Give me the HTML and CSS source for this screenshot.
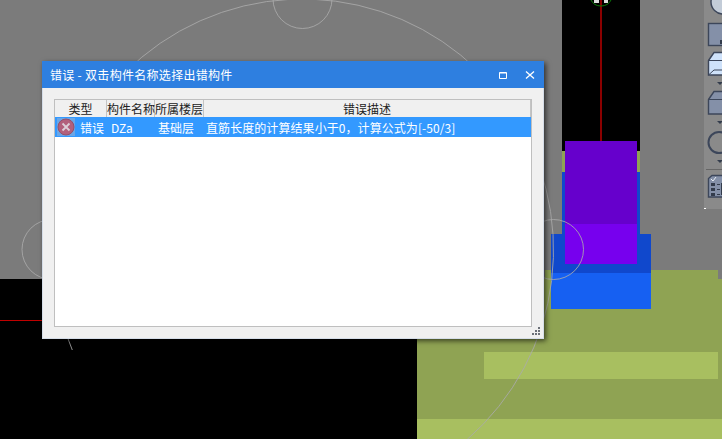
FILE: index.html
```html
<!DOCTYPE html>
<html lang="en">
<head>
    <meta charset="UTF-8">
    <title>错误</title>
    <link rel="stylesheet" href="styles.css">
</head>
<body>
    <!-- 3D view behind the dialog -->
    <svg class="scene" width="722" height="439" viewBox="0 0 722 439">
        <rect x="0" y="279" width="417" height="160" fill="#000"/>
        <path d="M417 279H545V270H718V279H722V439H417Z" fill="#8fa353"/>
        <rect x="484" y="352" width="234" height="27" fill="#a8bf60"/>
        <rect x="417" y="419" width="305" height="20" fill="#a8bf60"/>
        <rect x="0" y="320" width="42" height="1" fill="#c00000"/>

        <rect x="562" y="0" width="78" height="151" fill="#000"/>
        <rect x="562" y="151" width="78" height="21" fill="#8fa353"/>
        <rect x="562" y="172" width="78" height="62" fill="#1048cc"/>
        <rect x="551" y="234" width="100" height="39" fill="#1048cc"/>
        <rect x="551" y="273" width="100" height="36" fill="#1660f2"/>
        <rect x="565" y="141" width="72" height="83" fill="#6600cc"/>
        <rect x="565" y="224" width="72" height="40" fill="#7700ee"/>
        <rect x="600" y="0" width="2" height="141" fill="#8b0000"/>

        <path d="M591 0Q594 6 601 6Q608 6 611 0" fill="none" stroke="#0a7a0a" stroke-width="1"/>
        <rect x="594" y="0" width="5" height="3" fill="#ddd"/>
        <rect x="604" y="0" width="4" height="3" fill="#ddd"/>

        <g fill="none" stroke="#aaa" stroke-opacity="0.85" stroke-width="1">
            <path d="M72.300 350A251 251 0 1 1 467 439.600"/>
            <circle cx="302.5" cy="-1" r="29.5"/>
            <circle cx="553.5" cy="249.5" r="30"/>
            <circle cx="52" cy="249.5" r="30"/>
        </g>

        <!-- right hand toolbar -->
        <rect x="704" y="0" width="18" height="209" fill="#8a8a8a"/>
        <rect x="704" y="208" width="2" height="1" fill="#fff"/>
        <g stroke="#3c465a" stroke-width="1.4">
            <circle cx="723" cy="2" r="12" fill="#c3ccd8"/>
            <rect x="708.5" y="23.5" width="20" height="22" fill="#8490a8"/>
            <path d="M708.5 60.5L714 52.5H730V75H708.5Z" fill="#cfe2fa"/>
            <path d="M708.5 60.5H730M708.5 75L714 70H730" fill="none" stroke-width="1"/>
            <path d="M708.5 99.5L714 91.5H730V114H708.5Z" fill="#8490a8"/>
            <path d="M708.5 99.5H730" fill="none" stroke-width="1"/>
            <circle cx="719" cy="142.5" r="10.500" fill="none" stroke-width="2"/>
            <path d="M708.5 178.500L712 175.500H730V197H708.500Z" fill="#8490a8"/>
        </g>
        <path d="M711 179L713 181L716 177" fill="none" stroke="#e8edf4" stroke-width="1"/>
        <g fill="#333c4c">
            <path d="M717 82h6l-3 3z"/>
            <path d="M717 121h6l-3 3z"/>
            <path d="M717 160h6l-3 3z"/>
            <rect x="711" y="183" width="4" height="3"/>
            <rect x="711" y="188" width="4" height="3"/>
            <rect x="711" y="193" width="4" height="3"/>
            <rect x="717" y="184" width="3" height="1"/>
            <rect x="717" y="189" width="3" height="1"/>
            <rect x="717" y="194" width="3" height="1"/>
            <rect x="721" y="183" width="1" height="12"/>
            <rect x="720" y="40" width="2" height="4"/>
        </g>
        <rect x="706" y="169" width="16" height="1" fill="#666"/>
    </svg>

    <div class="dialog">
        <div class="title-bar">
            <span class="title-text">错误 - 双击构件名称选择出错构件</span>
            <svg class="win-btn" width="10" height="10" viewBox="0 0 10 10">
                <path d="M1.500 2.500H8.500V8.500H1.500Z M1.500 3H8.500" fill="none" stroke="#fff" stroke-width="1"/>
            </svg>
            <svg class="win-btn close-btn" width="10" height="10" viewBox="0 0 10 10">
                <path d="M1 1.500L9 8.500M9 1.500L1 8.500" fill="none" stroke="#fff" stroke-width="1.300"/>
            </svg>
        </div>
        <div class="dialog-body">
            <div class="list-box">
                <div class="list-head">
                    <div class="col-type head-cell">类型</div>
                    <div class="col-name head-cell">构件名称</div>
                    <div class="col-floor head-cell">所属楼层</div>
                    <div class="col-desc head-cell">错误描述</div>
                </div>
                <div class="list-row">
                    <div class="col-type row-type">
                        <svg class="err-icon" width="18" height="18" viewBox="0 0 18 18">
                            <rect width="18" height="18" fill="#6aa6e6"/>
                            <circle cx="9" cy="9" r="8" fill="#b2607c" stroke="#94506a"/>
                            <path d="M5.500 5.500L12.500 12.500M12.500 5.500L5.500 12.500" stroke="#dccfd8" stroke-width="1.800"/>
                        </svg>
                        <span>错误</span>
                    </div>
                    <div class="col-name row-name">DZa</div>
                    <div class="col-floor row-floor">基础层</div>
                    <div class="col-desc row-desc">直筋长度的计算结果小于0，计算公式为[-50/3]</div>
                </div>
            </div>
            <svg class="grip" width="9" height="9" viewBox="0 0 9 9" fill="#6b7078">
                <rect x="6" y="0" width="2" height="2"/>
                <rect x="3" y="3" width="2" height="2"/>
                <rect x="6" y="3" width="2" height="2"/>
                <rect x="0" y="6" width="2" height="2"/>
                <rect x="3" y="6" width="2" height="2"/>
                <rect x="6" y="6" width="2" height="2"/>
            </svg>
        </div>
    </div>
</body>
</html>
```

FILE: styles.css
```css
html, body {
    margin: 0;
    padding: 0;
}

body {
    width: 722px;
    height: 439px;
    overflow: hidden;
    position: relative;
    background-color: #7b7b7b;
    font-family: "Noto Sans CJK SC", "Noto Sans", sans-serif;
    font-size: 12px;
}

.scene {
    position: absolute;
    top: 0;
    left: 0;
    display: block;
}

/* floating window over the 3D view */
.dialog {
    position: absolute;
    top: 61px;
    left: 42px;
    width: 502px;
    height: 278px;
    display: flex;
    flex-direction: column;
    background-color: #f0f0f0;
    box-shadow: 2px 2px 5px 0 rgba(0, 0, 0, 0.6);
}

.title-bar {
    height: 27px;
    flex: none;
    display: flex;
    align-items: center;
    padding-left: 8px;
    background-color: #2e7fe0;
    color: #fff;
}

.title-text {
    flex: 1;
    letter-spacing: 0.3px;
}

.win-btn {
    display: block;
    margin-right: 17px;
}

.close-btn {
    margin-right: 9px;
}

.dialog-body {
    flex: 1;
    position: relative;
    padding: 11px 12px 12px 12px;
    border: 1px solid #d5dde8;
    border-top: none;
    box-sizing: border-box;
    display: flex;
    min-height: 0;
}

.list-box {
    flex: 1;
    margin-left: -1px;
    margin-right: -1px;
    margin-bottom: -1px;
    background-color: #fff;
    border: 1px solid #bfbfbf;
    box-sizing: border-box;
}

.list-head {
    height: 17px;
    display: flex;
    background-color: #f0f0f0;
}

.head-cell {
    box-sizing: border-box;
    border-right: 1px solid #c4c4c4;
    text-align: center;
    line-height: 17px;
    color: #222;
    white-space: nowrap;
}

.col-type {
    width: 52px;
    flex: none;
}

.col-name {
    width: 48px;
    flex: none;
}

.col-floor {
    width: 49px;
    flex: none;
}

.col-desc {
    flex: 1;
}

.list-row {
    height: 20px;
    display: flex;
    align-items: center;
    background-color: #3399ff;
    color: #fff;
    white-space: nowrap;
}

.row-type {
    display: flex;
    align-items: center;
    gap: 5px;
    padding-left: 2px;
    box-sizing: border-box;
}

.err-icon {
    display: block;
    flex: none;
}

.row-name {
    padding-left: 4px;
    box-sizing: border-box;
}

.row-floor {
    padding-left: 3px;
    box-sizing: border-box;
}

.row-desc {
    padding-left: 2px;
    letter-spacing: 0.07px;
}

.grip {
    position: absolute;
    right: 2px;
    bottom: 2px;
    display: block;
}
```
